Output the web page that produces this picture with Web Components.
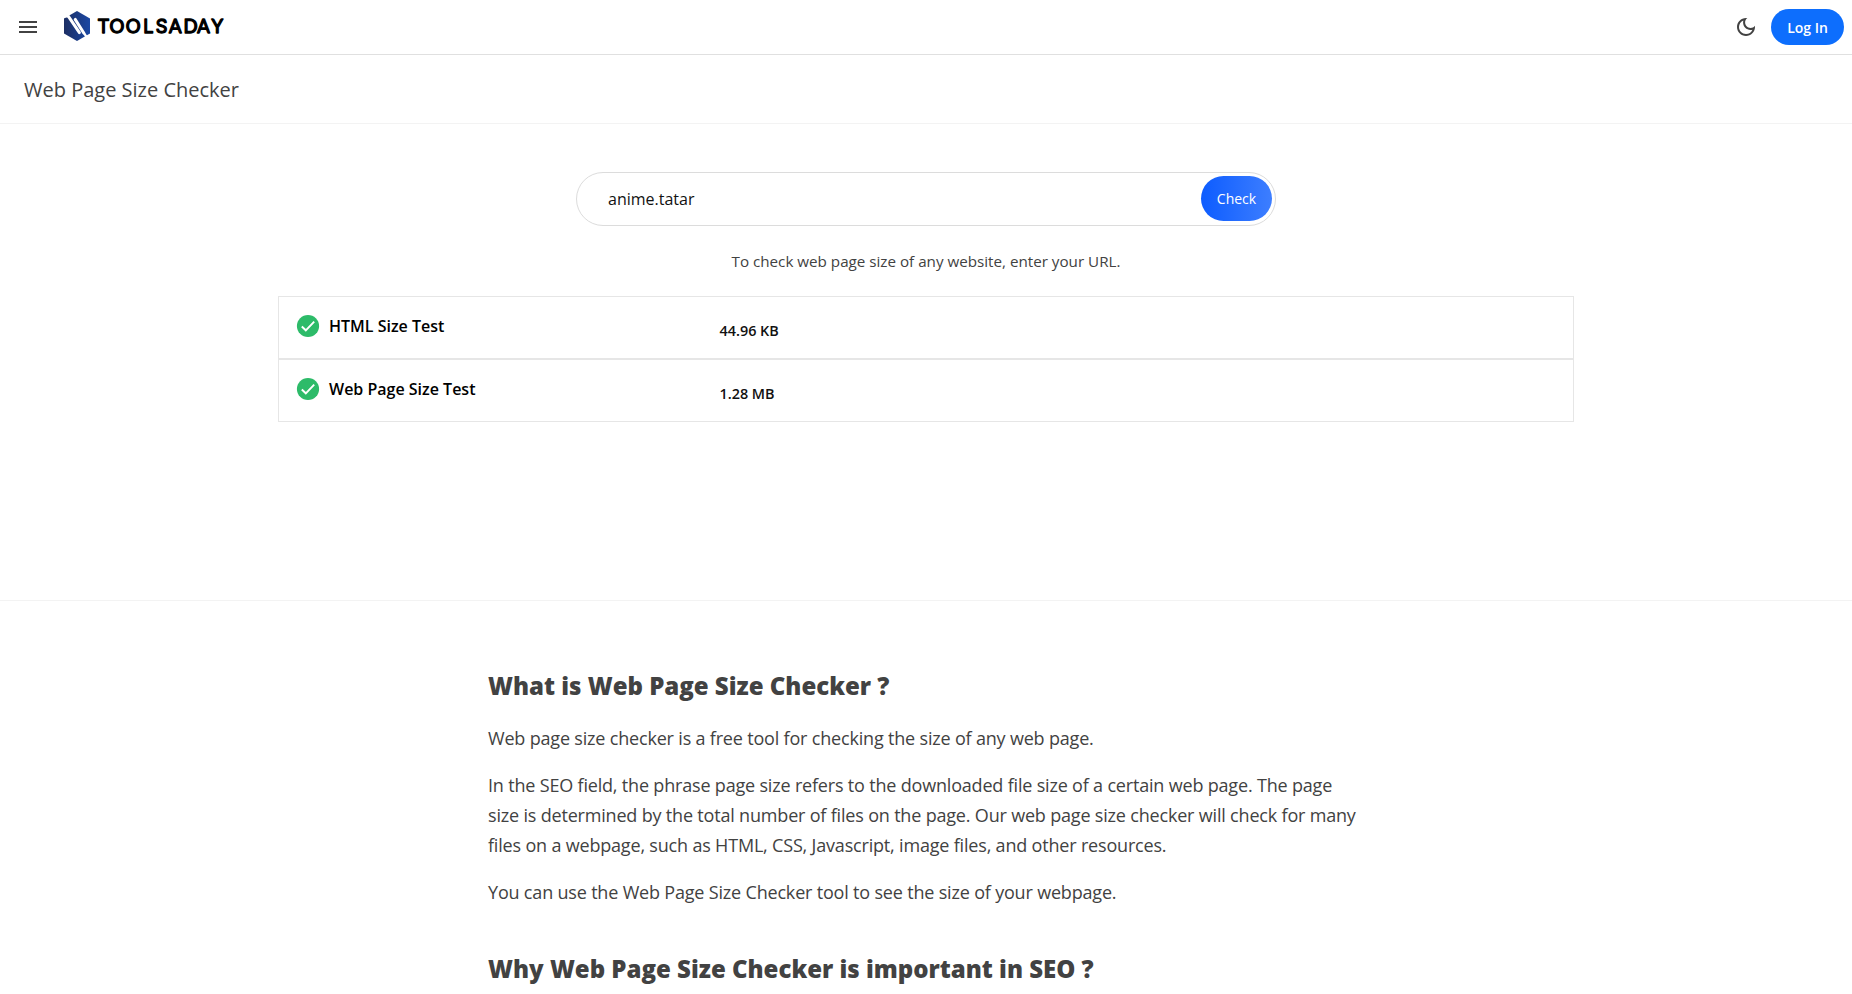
<!DOCTYPE html>
<html lang="en">
<head>
<meta charset="utf-8">
<title>Web Page Size Checker</title>
<style>
html,body{margin:0;height:994px;overflow:hidden;background:#fff;font-family:"Open Sans",sans-serif;color:#424242}
</style>
</head>
<body>
<tools-page></tools-page>
<script>
const define=(name,html)=>customElements.define(name,class extends HTMLElement{
  constructor(){super();this.attachShadow({mode:'open'}).innerHTML=html;}
});

define('brand-logo',`<style>:host{display:block;width:162px;height:32px}svg{display:block}</style>
<svg width="162" height="32" viewBox="0 0 162 32">
<defs><linearGradient id="g" x1="0" y1="0" x2="1" y2="0"><stop offset="0" stop-color="#1c2e63"/><stop offset="1" stop-color="#1b48a4"/></linearGradient></defs>
<path d="M14 0 27 7.5V22.5L14 30 1 22.5V7.5Z" fill="url(#g)"/>
<path d="M5.6 5.6 16.4 21.6M12.2 8.4 20.8 22" stroke="#fff" stroke-width="3" stroke-linecap="round" fill="none"/>
<path d="M1.5 5.3 5.6 5.2M20.6 21.6l5.6 8" stroke="#fff" stroke-width="2.4" fill="none"/>
<text x="35 46.4 62.8 80.3 92.8 105.9 120.6 134.2 148.4" y="22" font-family="Lato,sans-serif" font-weight="400" font-size="18.5" fill="#000" stroke="#000" stroke-width="1.3" stroke-linejoin="round">TOO<tspan font-family="Inter,sans-serif" font-size="18.2">LS</tspan>ADAY</text>
</svg>`);

define('log-in-button',`<style>:host{display:block}button{width:73px;height:36px;padding:1px 0 0;border:0;border-radius:18px;background:#0d6efd;color:#fff;font:600 14px/35px "Open Sans",sans-serif;display:block}</style><button><slot></slot></button>`);

define('app-header',`<style>
:host{display:flex;box-sizing:border-box;height:55px;border-bottom:1px solid #e0e0e0;align-items:center;padding:0 8px 0 16px}
.menu{display:block;margin-right:23px}
brand-logo{margin-top:-1px}
.moon{display:block;margin:0 13px 0 auto}
</style>
<svg class="menu" width="24" height="24" viewBox="0 0 24 24"><path fill="#424242" d="M3 18h18v-2H3v2zm0-5h18v-2H3v2zm0-7v2h18V6H3z"/></svg>
<brand-logo></brand-logo>
<svg class="moon" width="24" height="24" viewBox="0 0 24 24"><path fill="#424242" d="M9.37 5.51c-.18.64-.27 1.31-.27 1.99 0 4.08 3.32 7.4 7.4 7.4.68 0 1.35-.09 1.99-.27C17.45 17.19 14.93 19 12 19c-3.86 0-7-3.14-7-7 0-2.93 1.81-5.45 4.37-6.49zM12 3c-4.97 0-9 4.03-9 9s4.03 9 9 9 9-4.03 9-9c0-.46-.04-.92-.1-1.36-.98 1.37-2.58 2.26-4.4 2.26-2.98 0-5.4-2.42-5.4-5.4 0-1.81.89-3.42 2.26-4.4C12.92 3.04 12.46 3 12 3z"/></svg>
<log-in-button>Log In</log-in-button>`);

define('page-title',`<style>:host{display:flex;box-sizing:border-box;height:69px;border-bottom:1px solid #f3f3f3;align-items:center;padding:2px 0 0 24px}h1{margin:0;font-weight:400;font-size:20px;line-height:28px}</style><h1><slot></slot></h1>`);

define('url-search',`<style>
:host{display:flex;box-sizing:border-box;width:700px;height:54px;border:1px solid #dcdcdc;border-radius:27px;align-items:center;justify-content:space-between;padding:0 3px 0 31px;margin:0 auto}
span{font-size:16px;color:#111}
button{width:71px;height:45px;margin-bottom:1px;padding:0;border:0;border-radius:22.5px;background:linear-gradient(90deg,#0d5cff,#3d7eff);color:#fff;font:400 14px/45px "Open Sans",sans-serif}
</style><span><slot></slot></span><button>Check</button>`);

define('result-row',`<style>
:host{display:flex;box-sizing:border-box;height:63px;border:1px solid #e6e6e6;padding:0 17px}
.name{display:flex;align-items:center;height:58px;width:423.5px;gap:9px;font-weight:600;font-size:16px;color:#000}
.value{font-weight:600;font-size:14.4px;line-height:67px;color:#111}
</style><div class="name"><svg width="24" height="24" viewBox="0 0 24 24"><circle cx="12" cy="12" r="11.1" fill="#2dbb69"/><path d="M5.8 12.5 9.8 16.3 18.2 7.7" fill="none" stroke="#fff" stroke-width="1.9"/></svg><slot name="name"></slot></div><div class="value"><slot></slot></div>`);

define('checker-panel',`<style>
:host{display:block;box-sizing:border-box;height:477px;padding-top:48px;border-bottom:1px solid #f3f3f3}
.hint{margin:23px 0 0;text-align:center;font-size:15.2px;line-height:24px}
.list{width:1296px;margin:23px auto 0}
</style>
<url-search>anime.tatar</url-search>
<p class="hint">To check web page size of any website, enter your URL.</p>
<div class="list"><result-row><span slot="name">HTML Size Test</span>44.96 KB</result-row>
<result-row><span slot="name">Web Page Size Test</span>1.28 MB</result-row></div>`);

define('info-article',`<style>
:host{display:block;width:876px;margin:0 auto;padding-top:69px}
h2{margin:0;font-weight:800;font-size:24px;line-height:32px}
h2+p{margin-top:21px}
p{margin:0 0 17px;font-size:18px;line-height:30px;letter-spacing:-.184px}
p+h2{margin-top:46px}
</style>
<h2>What is Web Page Size Checker ?</h2>
<p>Web page size checker is a free tool for checking the size of any web page.</p>
<p>In the SEO field, the phrase page size refers to the downloaded file size of a certain web page. The page<br>size is determined by the total number of files on the page. Our web page size checker will check for many<br>files on a webpage, such as HTML, CSS, Javascript, image files, and other resources.</p>
<p>You can use the Web Page Size Checker tool to see the size of your webpage.</p>
<h2>Why Web Page Size Checker is important in SEO ?</h2>`);

define('tools-page',`<style>:host{display:block}</style>
<app-header></app-header><page-title>Web Page Size Checker</page-title><checker-panel></checker-panel><info-article></info-article>`);
</script>
</body>
</html>
